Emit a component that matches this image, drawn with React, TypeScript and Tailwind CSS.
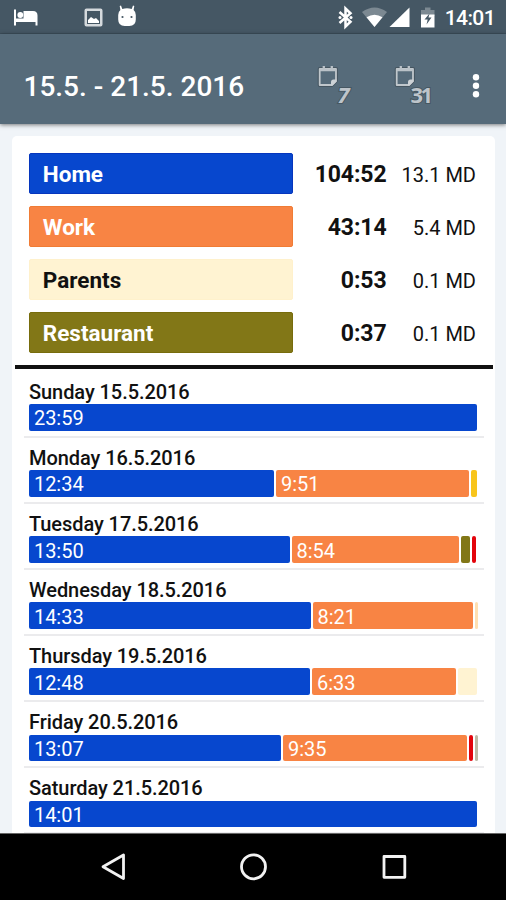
interface Place {
  name: string;
  time: string;
  days: string;
  className: string;
}

interface Segment {
  width: number;
  color: string;
  label?: string;
}

interface Day {
  title: string;
  segments: Segment[];
}

const BLUE = "#0747ce";
const ORANGE = "#f88444";

const places: Place[] = [
  { name: "Home", time: "104:52", days: "13.1 MD", className: "bg-[#0747ce] border-[#0636bd] text-white" },
  { name: "Work", time: "43:14", days: "5.4 MD", className: "bg-[#f88444] border-[#f07c35] text-white" },
  { name: "Parents", time: "0:53", days: "0.1 MD", className: "bg-[#fff3d2] border-[#fff1cc] text-[#111]" },
  { name: "Restaurant", time: "0:37", days: "0.1 MD", className: "bg-[#827717] border-[#776c0c] text-white" },
];

const days: Day[] = [
  { title: "Sunday 15.5.2016", segments: [{ width: 448, color: BLUE, label: "23:59" }] },
  {
    title: "Monday 16.5.2016",
    segments: [
      { width: 245, color: BLUE, label: "12:34" },
      { width: 193, color: ORANGE, label: "9:51" },
      { width: 6, color: "#f8c51c" },
    ],
  },
  {
    title: "Tuesday 17.5.2016",
    segments: [
      { width: 260.5, color: BLUE, label: "13:50" },
      { width: 167, color: ORANGE, label: "8:54" },
      { width: 9.5, color: "#827717" },
      { width: 4, color: "#e3040c" },
    ],
  },
  {
    title: "Wednesday 18.5.2016",
    segments: [
      { width: 281.5, color: BLUE, label: "14:33" },
      { width: 160.5, color: ORANGE, label: "8:21" },
      { width: 3, color: "#ffe0b2" },
    ],
  },
  {
    title: "Thursday 19.5.2016",
    segments: [
      { width: 281, color: BLUE, label: "12:48" },
      { width: 143.5, color: ORANGE, label: "6:33" },
      { width: 19.5, color: "#fff3d2" },
    ],
  },
  {
    title: "Friday 20.5.2016",
    segments: [
      { width: 252, color: BLUE, label: "13:07" },
      { width: 183.5, color: ORANGE, label: "9:35" },
      { width: 4, color: "#e3040c" },
      { width: 3, color: "#bfb9a5" },
    ],
  },
  { title: "Saturday 21.5.2016", segments: [{ width: 448, color: BLUE, label: "14:01" }] },
];

const StatusBar = () => (
  <header className="flex h-[34px] shrink-0 items-center justify-between border-b border-[#3d4f5c] bg-[#455764] pr-[11px] text-white">
    <svg width="150" height="33" viewBox="0 0 150 33" fill="currentColor">
      <path d="M14 9.500h2v9h7.500v-7.500h9.500q4.500 0 4.500 4.500V25.500h-2V22H16v3.500h-2z" />
      <circle cx="20.300" cy="15" r="2.900" />
      <path d="M86.500 8.500h14q2 0 2 2v14q0 2-2 2h-14q-2 0-2-2v-14q0-2 2-2zM87 11v13h13V11z" fillRule="evenodd" fill="#d5dadd" />
      <path d="M88 23v-3l3-3 3 2 2-1 3 3v2z" />
      <path d="M121 5.500l1.300 3.500q4.700-1.500 9.400 0l1.300-3.500 1.300.4-.7 4q2 1.500 2.200 5.100v4.500q0 6.500-6.500 6.500h-4.600q-6.500 0-6.500-6.500v-4.500q.2-3.600 2.200-5.100l-.7-4z" />
      <circle cx="122.500" cy="17" r="1.100" fill="#455764" />
      <circle cx="131.500" cy="17" r="1.100" fill="#455764" />
    </svg>
    <div className="flex items-center">
      <svg width="107" height="33" viewBox="338 0 107 33" fill="currentColor">
        <path d="M341.500 12l11 9.700-5 4.800V8.500l5 4.800-11 9.700" fill="none" stroke="currentColor" strokeWidth="2.500" />
        <circle cx="342" cy="17.500" r="1.500" />
        <circle cx="353" cy="17.500" r="1.500" />
        <path d="M364 12q12.500-9 25 0L376.500 27z" fill="#7c8992" />
        <path d="M368.500 17.300q8-5 16 0L376.500 27z" />
        <path d="M411.500 7.500v19.500h-20z" />
        <path d="M427 7.500h5.500v2.500h4v6h-13.500v-6h4z" fill="#7c8992" />
        <path d="M423 14.500h13.500v13H423z" />
        <path d="M431.500 13.500l-5 6h3.200l-1.200 5 5-7h-3z" fill="#455764" />
      </svg>
      <span className="pt-[3px] pl-[2px] text-[21px] leading-none font-medium tracking-[-0.600px]">14:01</span>
    </div>
  </header>
);

const CalendarIcon = ({ label }: { label: string }) => (
  <svg width="44" height="44" viewBox="0 0 44 44" fill="none">
    <path d="M2.700 5h16.300v11.500l-4.500 4.500h-11.800z" stroke="#465661" strokeWidth="4" strokeLinejoin="round" />
    <path d="M2.700 5h16.300v12l-4 4h-12.300z" fill="#566b7a" stroke="#c0c7cc" strokeWidth="1.800" strokeLinejoin="round" />
    <path d="M2.700 6h16.300M6.800 2v4M14.800 2v4" stroke="#bac2c8" strokeWidth="2.300" />
    <path d="M19.500 15.500v2l-4 4h-1.500v-3.500q0-2.500 2.500-2.500z" fill="#cdd2d6" />
    <text
      x={label === "7" ? 20.5 : 16.5}
      y="38.500"
      fill="#bdc4ca"
      stroke="#465762"
      strokeWidth="2"
      paintOrder="stroke"
      className={
        label === "7"
          ? "font-['Open_Sans',sans-serif] text-[22px] font-bold italic"
          : "font-['Open_Sans',sans-serif] text-[22px] font-bold tracking-[-2.500px]"
      }
    >
      {label}
    </text>
  </svg>
);

const AppBar = () => (
  <div className="z-10 flex h-[90px] shrink-0 items-center bg-[#566b7a] pt-[13px] pl-[23.500px] text-white shadow-[0_1px_4px_rgba(0,0,0,0.5)]">
    <h1 className="w-[293px] pt-[2px] text-[28px] leading-none font-medium whitespace-nowrap">15.5. - 21.5. 2016</h1>
    <div className="flex w-[147px] gap-[33px]">
      <CalendarIcon label="7" />
      <CalendarIcon label="31" />
    </div>
    <svg width="24" height="30" viewBox="0 0 24 30" fill="currentColor">
      <circle cx="12" cy="6.200" r="3.200" />
      <circle cx="12" cy="14.700" r="3.200" />
      <circle cx="12" cy="23.200" r="3.200" />
    </svg>
  </div>
);

const PlaceRow = ({ place }: { place: Place }) => (
  <div className="flex h-[41px] items-center">
    <div className={`flex h-full w-[264.500px] items-center rounded-[2px] border pt-[2px] pl-[13.300px] text-[22.500px] font-bold ${place.className}`}>
      {place.name}
    </div>
    <div className="w-[93.500px] pt-[4px] text-right text-[23px] font-bold tracking-[-0.100px]">{place.time}</div>
    <div className="w-[89.500px] pt-0.5 text-right text-[20px]">{place.days}</div>
  </div>
);

const DayRow = ({ day }: { day: Day }) => (
  <div className="h-[66.100px] shrink-0 border-b-2 border-[#ebebed] pt-[8px] pl-[5px]">
    <div className="h-[24.600px] text-[20px] leading-[24px] font-medium tracking-[-0.070px]">{day.title}</div>
    <div className="ml-[0.400px] flex h-[26.500px] gap-[2px]">
      {day.segments.map((segment, i) => (
        <div
          key={i}
          className="flex shrink-0 items-center rounded-[2px] pt-[2px] text-[20px] leading-none text-white"
          style={{ width: segment.width, backgroundColor: segment.color, paddingLeft: segment.label ? 4.5 : 0 }}
        >
          {segment.label}
        </div>
      ))}
    </div>
  </div>
);

const NavBar = () => (
  <nav className="z-10 flex h-[67px] shrink-0 items-center border-t border-[#666] bg-black">
    <svg width="506" height="66" viewBox="0 834 506 66" fill="none" stroke="#f2f2f2" strokeWidth="2.800" strokeLinejoin="round">
      <path d="M123.500 855v23.500L103 866.800z" />
      <circle cx="253.500" cy="866.800" r="12" />
      <rect x="384" y="856.500" width="20.800" height="20.800" />
    </svg>
  </nav>
);

export default function App() {
  return (
    <div className="flex h-[900px] w-[506px] flex-col overflow-hidden bg-[#f0f4f8] font-[Roboto,sans-serif] text-[#111]">
      <StatusBar />
      <AppBar />
      <main className="mt-3 mr-[11px] ml-3 flex min-h-0 flex-1 flex-col overflow-hidden rounded-t-[5px] bg-white">
        <section className="flex flex-col gap-3 pt-[17px] pl-[16.500px]">
          {places.map((place) => (
            <PlaceRow key={place.name} place={place} />
          ))}
        </section>
        <hr className="mt-[11.500px] mr-[2px] ml-[3px] shrink-0 border-t-4 border-[#111]" />
        <section className="mr-[11px] ml-[12px] flex flex-col pt-[3px]">
          {days.map((day) => (
            <DayRow key={day.title} day={day} />
          ))}
        </section>
      </main>
      <NavBar />
    </div>
  );
}
